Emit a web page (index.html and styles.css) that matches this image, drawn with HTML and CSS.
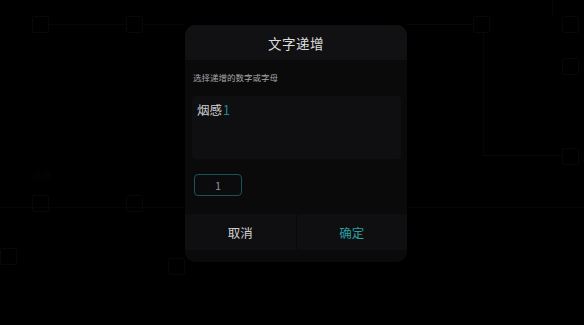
FILE: index.html
```html
<!DOCTYPE html>
<html lang="zh">
<head>
<meta charset="utf-8">
<link rel="stylesheet" href="styles.css">
</head>
<body>
<div class="canvas">
  <div class="node" style="left:32px;top:16px"></div>
  <div class="node" style="left:126px;top:16px"></div>
  <div class="node" style="left:32px;top:195px"></div>
  <div class="node" style="left:126px;top:195px"></div>
  <div class="node" style="left:0px;top:248px"></div>
  <div class="node" style="left:168px;top:258px"></div>
  <div class="node" style="left:473px;top:16px"></div>
  <div class="node" style="left:562px;top:16px"></div>
  <div class="node" style="left:562px;top:58px"></div>
  <div class="node" style="left:562px;top:148px"></div>
  <div class="hline blue" style="left:49px;top:24px;width:77px"></div>
  <div class="hline blue" style="left:142px;top:24px;width:43px"></div>
  <div class="hline red" style="left:407px;top:24px;width:66px"></div>
  <div class="vline" style="left:483px;top:32px;height:123px"></div>
  <div class="hline red" style="left:483px;top:155px;width:79px"></div>
  <div class="hline blue" style="left:0px;top:207px;width:584px"></div>
  <div class="vline" style="left:552px;top:0px;height:16px"></div>
  <div class="ghost" style="left:32px;top:168px">场景</div>
</div>
<div class="overlay">
  <div class="dialog">
    <div class="dialog-header">文字递增</div>
    <div class="dialog-body">
      <div class="label">选择递增的数字或字母</div>
      <div class="preview">烟感<span class="accent">1</span></div>
      <div class="step">1</div>
    </div>
    <div class="dialog-footer">
      <div class="btn cancel">取消</div>
      <div class="btn ok">确定</div>
    </div>
  </div>
</div>
</body>
</html>
```

FILE: styles.css
```css
html, body {
  margin: 0;
  padding: 0;
  background: #000;
  width: 584px;
  height: 325px;
  overflow: hidden;
  font-family: "Noto Sans CJK SC", "Noto Sans", sans-serif;
}
.canvas {
  position: absolute;
  left: 0;
  top: 0;
  width: 584px;
  height: 325px;
}
.node {
  position: absolute;
  width: 15px;
  height: 15px;
  border: 1px solid #040b06;
  border-radius: 2px;
}
.hline {
  position: absolute;
  height: 1px;
}
.hline.blue { background: #05060d; }
.hline.red { background: #0d0605; }
.vline {
  position: absolute;
  width: 1px;
  background: #060607;
}
.ghost {
  position: absolute;
  font-size: 10px;
  color: #060606;
}
.overlay {
  position: absolute;
  left: 0;
  top: 0;
  width: 584px;
  height: 325px;
  display: flex;
  justify-content: flex-start;
  align-items: flex-start;
  padding: 25px 0 0 185px;
  box-sizing: border-box;
}
.dialog {
  width: 222px;
  height: 237px;
  background: #0a0a0b;
  border-radius: 10px;
  overflow: hidden;
  display: flex;
  flex-direction: column;
}
.dialog-header {
  height: 35px;
  background: #111113;
  color: #dcdcdc;
  font-size: 13.5px;
  display: flex;
  align-items: center;
  justify-content: center;
  letter-spacing: 0.5px;
}
.dialog-body {
  padding: 11px 6px 0 7px;
  display: flex;
  flex-direction: column;
}
.label {
  font-size: 8.5px;
  line-height: 12px;
  color: #a8a8a8;
  padding-left: 1px;
}
.preview {
  margin-top: 13px;
  height: 63px;
  background: #0f0f11;
  border-radius: 4px;
  box-sizing: border-box;
  padding: 5px 5px;
  font-size: 12.5px;
  line-height: 18px;
  color: #d0d0d0;
}
.accent {
  color: #1b8c8e;
  margin-left: 1px;
}
.step {
  margin-top: 15px;
  margin-left: 2px;
  width: 48px;
  height: 22px;
  box-sizing: border-box;
  border: 1px solid #1a5357;
  border-radius: 4px;
  background: #0b0b0d;
  color: #8f8f8f;
  font-size: 11px;
  display: flex;
  align-items: center;
  justify-content: center;
}
.dialog-footer {
  margin-top: 18px;
  height: 36px;
  background: #0f0f11;
  display: flex;
}
.btn {
  flex: 1;
  display: flex;
  align-items: center;
  justify-content: center;
  font-size: 12.5px;
}
.cancel {
  color: #cfcfcf;
  border-right: 1px solid #09090a;
}
.ok {
  color: #2a9fa0;
}
```
